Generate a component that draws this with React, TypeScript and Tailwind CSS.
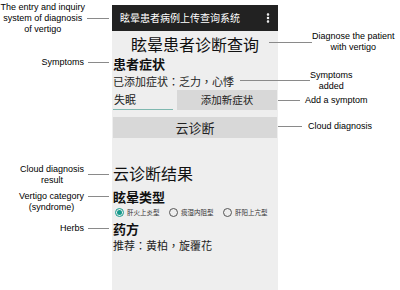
import { EllipsisVertical } from 'lucide-react';

const cjk = { fontFamily: '"Noto Sans CJK SC", "Noto Sans", sans-serif' };
const cjkTc = { fontFamily: '"Noto Sans CJK TC", "Noto Sans CJK SC", sans-serif' };
const latin = { fontFamily: '"Liberation Sans", Arial, sans-serif' };

function Note({ children }: { children: React.ReactNode }) {
  return (
    <div className="whitespace-nowrap text-center text-[9px] leading-[11px] text-black" style={latin}>
      {children}
    </div>
  );
}

// side cells have no height of their own, so callouts never stretch a row
function Row({
  left,
  right,
  bg = 'bg-[#eeeeee]',
  className = '',
  children,
}: {
  left?: React.ReactNode;
  right?: React.ReactNode;
  bg?: string;
  className?: string;
  children?: React.ReactNode;
}) {
  return (
    <div className="flex">
      <div className="flex h-0 w-[112px] shrink-0 items-center justify-end self-center pr-[3px]">{left}</div>
      <div className={`w-[166px] shrink-0 px-[1px] ${bg} ${className}`}>{children}</div>
      <div className="flex h-0 min-w-0 flex-1 items-center self-center">{right}</div>
    </div>
  );
}

function LeftCallout({ children }: { children: React.ReactNode }) {
  return (
    <div className="flex items-center gap-[4px]">
      <Note>{children}</Note>
      <span className="h-px w-[21px] bg-[#8a8a8a]" />
    </div>
  );
}

function Radio({ label, checked }: { label: string; checked?: boolean }) {
  return (
    <div className="flex w-[56px] items-center gap-[3px]">
      <span
        className={`flex h-[9px] w-[9px] items-center justify-center rounded-full border ${
          checked ? 'border-[#159a8c]' : 'border-[#555]'
        }`}
      >
        {checked && <span className="h-[5px] w-[5px] rounded-full bg-[#159a8c]" />}
      </span>
      <span className="text-[6.5px] leading-none text-[#333]">{label}</span>
    </div>
  );
}

export default function App() {
  return (
    <div className="h-[290px] w-[400px] overflow-hidden bg-white pt-[5px]" style={cjk}>
      <Row
        bg="bg-[#222222]"
        className="flex h-[26px] items-center justify-between pl-[8px] pr-[4px]"
        left={
          <div className="flex items-center gap-[2px]">
            <Note>
              The entry and inquiry
              <br />
              system of diagnosis
              <br />
              of vertigo
            </Note>
            <span className="h-px w-[22px] bg-[#8a8a8a]" />
          </div>
        }
      >
        <span className="text-[10px] leading-none text-white">眩晕患者病例上传查询系统</span>
        <EllipsisVertical size={12} strokeWidth={3} className="text-white" />
      </Row>

      <Row
        className="pb-[1px] pt-[5px]"
        right={
          <div className="-ml-[9px] flex items-center">
            <span className="h-px w-[43px] bg-[#8a8a8a]" />
            <Note>
              Diagnose the patient
              <br />
              with vertigo
            </Note>
          </div>
        }
      >
        <h1 className="text-center text-[16px] leading-[16px] text-[#111]">眩晕患者诊断查询</h1>
      </Row>

      <Row className="pb-[2px] pt-[4px]" left={<LeftCallout>Symptoms</LeftCallout>}>
        <h2 className="text-[13px] font-bold leading-[13px] text-[#111]">患者症状</h2>
      </Row>

      <Row
        className="pb-[2px] pt-[4px]"
        right={
          <div className="-ml-[38px] flex items-center">
            <span className="h-px w-[70px] bg-[#8a8a8a]" />
            <Note>
              Symptoms
              <br />
              added
            </Note>
          </div>
        }
      >
        <p className="text-[11px] leading-[11px] text-[#222]" style={cjkTc}>
          已添加症状：乏力，心悸
        </p>
      </Row>

      <Row
        className="pb-[2px] pt-[1px]"
        right={
          <div className="flex items-center gap-[5px]">
            <span className="h-px w-[22px] bg-[#8a8a8a]" />
            <Note>Add a symptom</Note>
          </div>
        }
      >
        <div className="flex h-[20px] items-stretch gap-[4px]">
          <div className="flex w-[60px] items-center border-b-[1.5px] border-[#7fb8b0] pl-[1px] text-[11px] leading-none text-[#222]">
            失眠
          </div>
          <button className="flex-1 bg-[#d8d8d8] text-[10.5px] leading-none text-[#222]">添加新症状</button>
        </div>
      </Row>

      <Row
        className="py-[2px]"
        right={
          <div className="flex items-center gap-[6px]">
            <span className="h-px w-[24px] bg-[#8a8a8a]" />
            <Note>Cloud diagnosis</Note>
          </div>
        }
      >
        <button className="h-[21px] w-full bg-[#d8d8d8] text-[13px] leading-none text-[#222]">云诊断</button>
      </Row>

      <Row className="h-[23px]" />

      <Row
        className="pb-[5px] pt-[2px]"
        left={
          <LeftCallout>
            Cloud diagnosis
            <br />
            result
          </LeftCallout>
        }
      >
        <h2 className="text-[16px] leading-[16px] text-[#111]">云诊断结果</h2>
      </Row>

      <Row
        className="pb-[3px] pt-[4px]"
        left={
          <div className="mt-[11px] flex items-start gap-[4px]">
            <Note>
              Vertigo category
              <br />
              (syndrome)
            </Note>
            <span className="mt-[5px] h-px w-[21px] bg-[#8a8a8a]" />
          </div>
        }
      >
        <h3 className="text-[13px] font-bold leading-[13px] text-[#111]">眩晕类型</h3>
      </Row>

      <Row className="py-[1px]">
        <div className="flex h-[10px] items-center pl-[2px]">
          <Radio label="肝火上炎型" checked />
          <Radio label="痰湿内阻型" />
          <Radio label="肝阳上亢型" />
        </div>
      </Row>

      <Row className="pb-[3px] pt-[4px]" left={<LeftCallout>Herbs</LeftCallout>}>
        <h3 className="text-[13px] font-bold leading-[13px] text-[#111]">药方</h3>
      </Row>

      <Row className="h-[53px] pt-[2px]">
        <p className="text-[11px] leading-[11px] text-[#222]" style={cjkTc}>
          推荐：黄柏，旋覆花
        </p>
      </Row>
    </div>
  );
}
